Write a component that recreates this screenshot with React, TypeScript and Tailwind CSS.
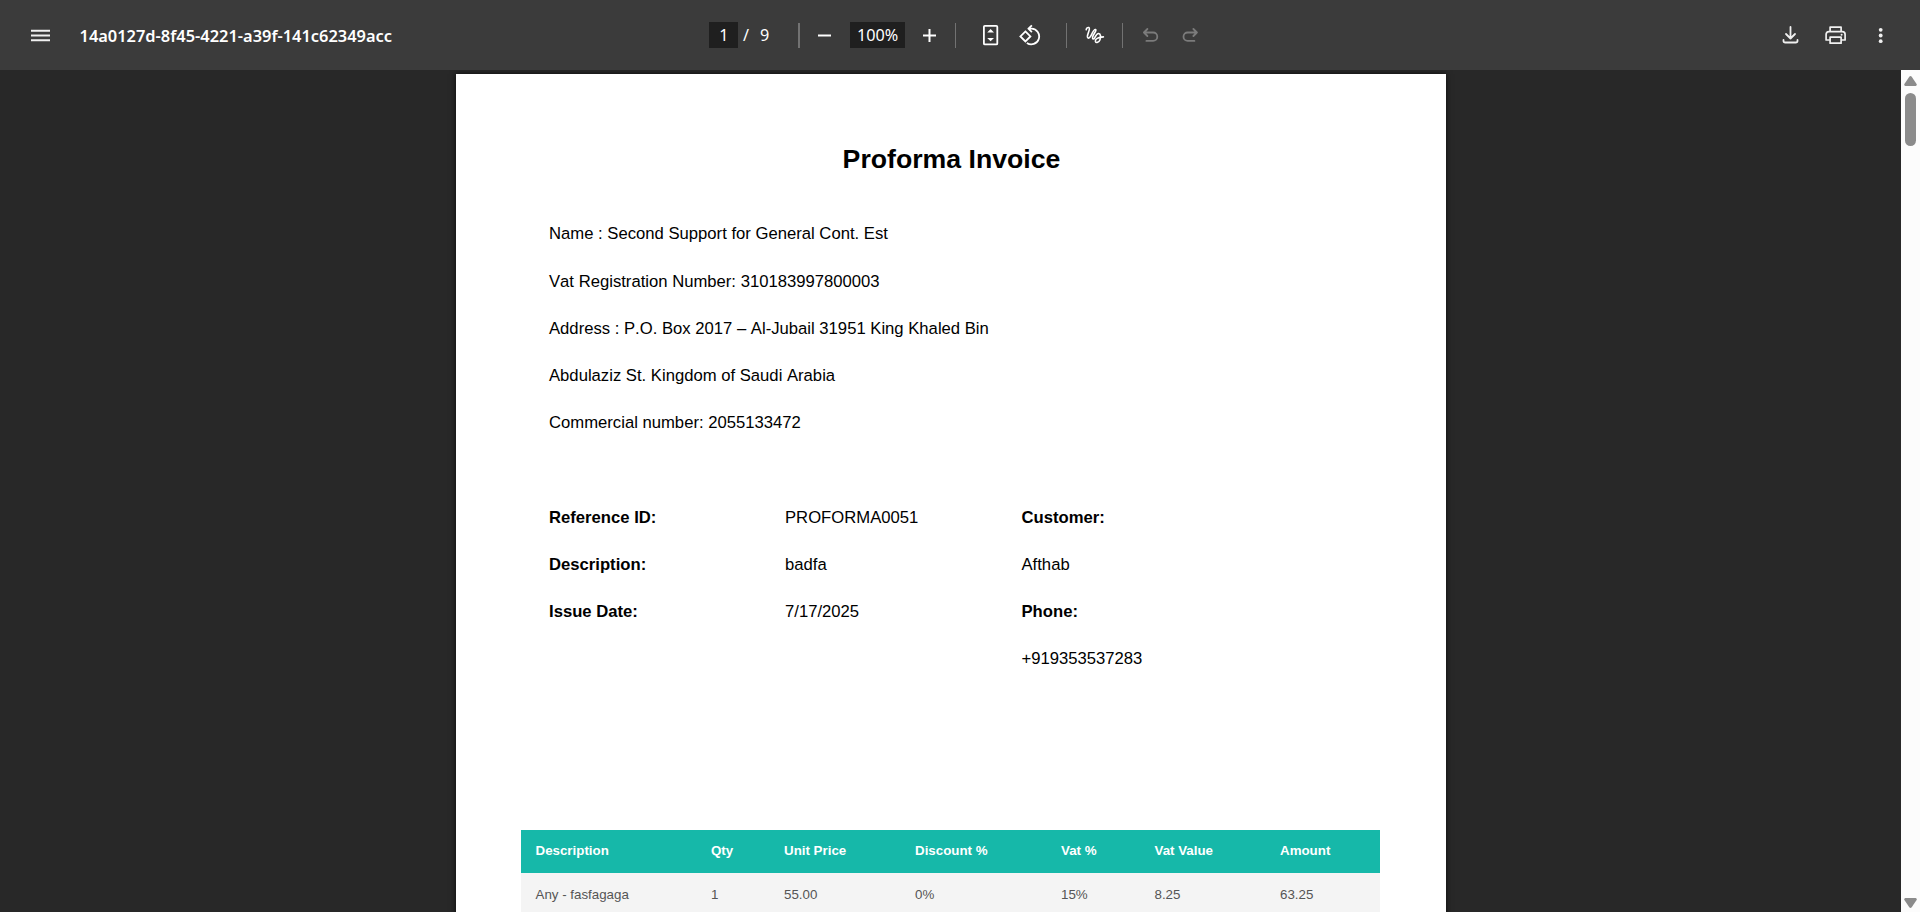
import React from "react";

type SvgProps = { w: number; h?: number; children: React.ReactNode; className?: string };

const Icon = ({ w, h = w, children, className = "" }: SvgProps) => (
  <svg
    width={w}
    height={h}
    viewBox={`0 0 ${w} ${h}`}
    fill="none"
    stroke="currentColor"
    strokeWidth={1.8}
    strokeLinecap="round"
    strokeLinejoin="round"
    className={`shrink-0 ${className}`}
  >
    {children}
  </svg>
);

const Divider = ({ className = "w-px" }: { className?: string }) => (
  <div className={`h-[25px] shrink-0 bg-[#727272] ${className}`} />
);

const supplier = [
  "Vat Registration Number: 310183997800003",
  "Address : P.O. Box 2017 – Al-Jubail 31951 King Khaled Bin",
  "Abdulaziz St. Kingdom of Saudi Arabia",
  "Commercial number: 2055133472",
];

const header = ["Description", "Qty", "Unit Price", "Discount %", "Vat %", "Vat Value", "Amount"];
const row = ["Any - fasfagaga", "1", "55.00", "0%", "15%", "8.25", "63.25"];
const columns = "grid grid-cols-[175.5px_73px_131px_146px_93.5px_125.5px_1fr] pl-[15px]";

function Toolbar() {
  return (
    <header className="flex h-[70px] shrink-0 items-center bg-[#3b3b3b] text-[#f0f0f0]">
      <div className="flex w-[709px] items-center pl-[30px]">
        <Icon w={20}>
          <path d="M1 5.75h19M1 10.5h19M1 15.25h19" strokeLinecap="butt" />
        </Icon>
        <h1 className="ml-[29.5px] pt-[2px] text-[16.4px] leading-[22px] font-semibold whitespace-nowrap text-white">
          14a0127d-8f45-4221-a39f-141c62349acc
        </h1>
      </div>

      <div className="flex items-center text-[16.2px] leading-[27px] text-white">
        <div className="h-[26px] w-[29px] bg-[#1f1f1f] pl-px text-center">1</div>
        <span className="ml-[5px] w-[17px]">/</span>
        <span className="w-[38px]">9</span>
        <Divider className="mt-px w-[2px]" />
        <Icon w={15} className="ml-[17px]">
          <path d="M1 7.5h13" strokeLinecap="butt" strokeWidth={2} />
        </Icon>
        <div className="ml-[18px] h-[26px] w-[55px] bg-[#1f1f1f] text-center">100%</div>
        <Icon w={15} className="ml-[17px]">
          <path d="M1 7.5h13M7.5 1v13" strokeLinecap="butt" strokeWidth={2} />
        </Icon>
        <Divider className="mt-px ml-[18px] w-px" />
        <Icon w={16} h={22} className="ml-[27px]">
          <rect x="0.9" y="1.8" width="13.4" height="18.6" rx="1" />
          <path d="M4.2 8.4 7.6 5l3.4 3.4zM4.2 14h6.8l-3.4 3.2z" fill="currentColor" stroke="none" />
        </Icon>
        <Icon w={23} h={22} className="ml-[19px]">
          <path d="M7.400 7.400 12.400 12.400 7.400 17.400 2.400 12.400z" strokeLinejoin="miter" />
          <path d="M10.900 4.700h2.700a7.800 7.800 0 1 1-4.700 14.200M13.900 1.300l-3.500 3.400 3.500 3.400" strokeLinecap="butt" />
        </Icon>
        <Divider className="mt-px ml-[25px] w-px" />
        <Icon w={20} h={20} className="ml-[18px]">
          <path
            d="M1.200 4.800C1.400 3 2.700 2.200 3.800 2.600c2.300 1-1.900 6.600-1.400 9.300.6 2.600 2.800.6 4-2C7.800 6.800 9.100 4 10.500 4.500c1.700.7-2.200 4.500-2.900 7.600-.4 2 .9 2.500 2 .9 1.100-2 2.200-4.600 4-4.500 2.300.2 2.400 4 1.300 6.500-1 2.300-3.700 3.400-4.500 1.500-.6-2.200 2.600-4.500 8-4.600"
            strokeWidth={1.600}
          />
        </Icon>
        <Divider className="mt-px ml-[17px] w-px" />
        <Icon w={17} h={16} className="ml-[19px] text-[#7b7b7b]">
          <path d="M5.400 2 1.900 5.500 5.400 9M1.900 5.500h9.200a4.200 4.200 0 0 1 0 8.400H4.400" />
        </Icon>
        <Icon w={17} h={16} className="ml-[22px] text-[#7b7b7b]">
          <path d="M12.400 2 15.900 5.500 12.400 9M15.900 5.500H6.700a4.200 4.200 0 0 0 0 8.400H13.400" />
        </Icon>
      </div>

      <div className="ml-auto flex items-center pr-[36px]">
        <Icon w={17} h={20}>
          <path d="M8.500 2v11.500M4 9l4.500 4.500L13 9M1.500 15v.7q0 1.800 1.800 1.800h10.400q1.800 0 1.800-1.800V15" />
        </Icon>
        <Icon w={22} h={20} className="ml-[26px]">
          <path d="M5.100 6.700V2.200h11v4.500M5.100 15H1.100V9.500q0-2.800 2.800-2.800h13.400q2.800 0 2.800 2.800V15h-4M5.100 12.200h11v6h-11z" strokeWidth={1.700} />
          <circle cx="16.600" cy="9.800" r="1" fill="currentColor" stroke="none" />
        </Icon>
        <Icon w={6} h={20} className="ml-[31px]">
          <g fill="currentColor" stroke="none">
            <circle cx="2.700" cy="4.800" r="1.900" />
            <circle cx="2.700" cy="10.500" r="1.900" />
            <circle cx="2.700" cy="16.200" r="1.900" />
          </g>
        </Icon>
      </div>
    </header>
  );
}

function InvoicePage() {
  return (
    <article className="h-[1400px] w-[990px] bg-white font-['Liberation_Sans',Arial,sans-serif] text-[16.67px] leading-[47px] text-black shadow-[0_0_6px_rgba(0,0,0,0.7)]">
      <h2 className="pt-[69px] pl-[2px] text-center text-[26.67px] leading-[32px] font-bold">Proforma Invoice</h2>
      <section className="mt-[35px] pl-[93.5px] [font-kerning:none]">
        <p className="h-12">Name : Second Support for General Cont. Est</p>
        {supplier.map((line) => (
          <p key={line}>{line}</p>
        ))}
      </section>
      <section className="mt-[48px] grid grid-cols-[236px_236.5px_1fr] pl-[93.5px] [font-kerning:none]">
        <div className="font-bold">
          <p>Reference ID:</p>
          <p>Description:</p>
          <p>Issue Date:</p>
        </div>
        <div>
          <p>PROFORMA0051</p>
          <p>badfa</p>
          <p>7/17/2025</p>
        </div>
        <div>
          <p className="font-bold">Customer:</p>
          <p>Afthab</p>
          <p className="font-bold">Phone:</p>
          <p>+919353537283</p>
        </div>
      </section>
      <section className="mt-[148px] ml-[65px] w-[859px] text-[13.33px]">
        <div className={`${columns} h-[43px] bg-[#16b8a9] leading-[41px] font-bold text-white`}>
          {header.map((h) => (
            <span key={h}>{h}</span>
          ))}
        </div>
        <div className={`${columns} h-[43px] bg-[#f4f4f4] leading-[43px] text-[#555555]`}>
          {row.map((c) => (
            <span key={c}>{c}</span>
          ))}
        </div>
      </section>
    </article>
  );
}

export default function App() {
  return (
    <div className="flex h-[912px] w-[1920px] flex-col overflow-hidden bg-[#282828] font-['Noto_Sans',sans-serif]">
      <Toolbar />
      <div className="flex min-h-0 flex-1">
        <main className="flex flex-1 justify-center overflow-hidden pt-1">
          <InvoicePage />
        </main>
        <aside className="flex w-[19px] flex-col items-center bg-[#fcfcfc] pt-[6px] pb-[4px] text-[#8b8b8b]">
          <svg width="13" height="10" viewBox="0 0 13 10" fill="currentColor">
            <path d="M5.300.7q1.200-1.300 2.400 0L12.600 8q.7 1.600-1 2H1.400q-1.700-.4-1-2z" />
          </svg>
          <div className="mt-[7px] h-[53px] w-[11px] rounded-full bg-[#8b8b8b]" />
          <svg width="13" height="10" viewBox="0 0 13 10" fill="currentColor" className="mt-auto">
            <path d="M5.300 9.300q1.200 1.300 2.400 0L12.600 2q.7-1.600-1-2H1.400Q-.3.400.4 2z" />
          </svg>
        </aside>
      </div>
    </div>
  );
}
